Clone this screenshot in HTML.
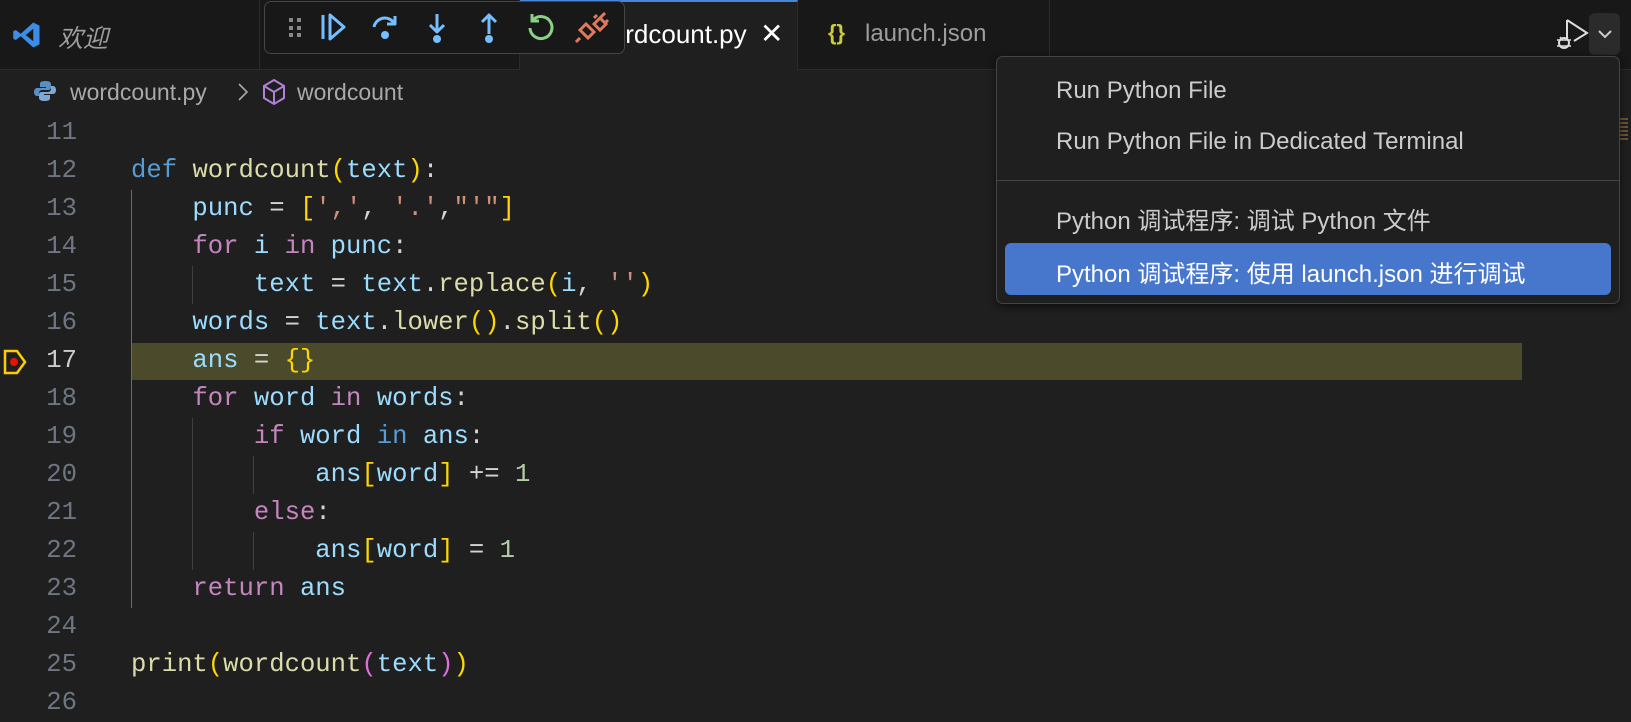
<!DOCTYPE html>
<html><head><meta charset="utf-8"><style>
*{margin:0;padding:0;box-sizing:border-box}
body{width:1631px;height:696px;background:#1f1f1f;position:relative;overflow:hidden;font-family:"Liberation Sans","Noto Sans CJK SC",sans-serif;color:#ccc}
.abs{position:absolute}
.tabs{left:0;top:0;width:1631px;height:70px;background:#181818;border-bottom:1px solid #2b2b2b}
.code{font-family:"Liberation Mono",monospace;font-size:25.6px;white-space:pre;line-height:38px}
.ln{position:absolute;left:0;width:77px;text-align:right;color:#6e7681;font-family:"Liberation Mono",monospace;font-size:25.6px;line-height:38px}
.cl{position:absolute;left:131px;color:#9cdcfe}
.k{color:#c586c0}.d{color:#569cd6}.f{color:#dcdcaa}.s{color:#ce9178}.y{color:#ffd700}.p{color:#da70d6}.n{color:#b5cea8}.w{color:#d4d4d4}
.guide{position:absolute;width:1px;background:#404040}
.menu{left:996px;top:56px;width:624px;height:248px;background:#1f1f1f;border:1px solid #454545;border-radius:7px;box-shadow:0 2px 8px rgba(0,0,0,.6)}
.mi{position:absolute;left:59px;font-size:24px;color:#ccc}
</style></head><body>
<div class="abs tabs"></div>
<div class="abs" style="left:0;top:0;width:260px;height:70px;border-right:1px solid #2b2b2b"></div>
<svg class="abs" style="left:12px;top:20px" width="30" height="30" viewBox="0 0 24 24"><path d="M17 2l5 2.5v15L17 22 7 13l-4 3-2-1V9l2-1 4 3 10-9zm0 5l-6 5 6 5z" fill="#3a8ee6"/></svg>
<div class="abs" style="left:58px;top:19px;font-size:25px;font-style:italic;color:#9d9d9d">欢迎</div>
<div class="abs" style="left:260px;top:0;width:260px;height:70px;border-right:1px solid #2b2b2b"></div>
<div class="abs" style="left:520px;top:0;width:278px;height:71px;background:#1f1f1f;border-top:2px solid #4a86d6;border-right:1px solid #2b2b2b"></div>
<div class="abs" style="left:592px;top:19px;font-size:26px;color:#fff">wordcount.py</div>
<div class="abs" style="left:760px;top:17px;font-size:28px;color:#fff">✕</div>
<div class="abs" style="left:798px;top:0;width:252px;height:70px;border-right:1px solid #2b2b2b"></div>
<div class="abs" style="left:828px;top:20px;font-size:22px;color:#cbcb41;font-weight:bold">{}</div>
<div class="abs" style="left:865px;top:20px;font-size:24px;color:#9d9d9d">launch.json</div>
<div class="abs" style="left:264px;top:1px;width:361px;height:53px;background:#181818;border:1px solid #454545;border-radius:7px"></div>
<svg class="abs" style="left:264px;top:1px" width="361" height="53" viewBox="264 1 361 53">
<g fill="#888"><rect x="289" y="18" width="4" height="4"/><rect x="297" y="18" width="4" height="4"/><rect x="289" y="26" width="4" height="4"/><rect x="297" y="26" width="4" height="4"/><rect x="289" y="33" width="4" height="4"/><rect x="297" y="33" width="4" height="4"/></g>
<g stroke="#75beff" stroke-width="3" fill="none" stroke-linejoin="round">
<path d="M323 15v24M330 15v24l14-12z"/>
<path d="M374 27a11 11 0 0 1 20-4M395 16v8h-8"/>
<path d="M437 14v17M430 25l7 7 7-7"/>
<path d="M489 34v-18M482 22l7-7 7 7"/>
</g>
<g fill="#75beff"><circle cx="385" cy="35" r="4"/><circle cx="437" cy="39" r="4"/><circle cx="489" cy="39" r="4"/></g>
<path d="M533 20a11 11 0 1 1 -3 8M532 14v7h7" stroke="#89d185" stroke-width="3" fill="none"/>
<g stroke="#e07a5f" stroke-width="3" fill="none"><path d="M580 30l6-6 8 8-6 6zM594 24l6-6 6 6-6 6zM580 38l-4 4M601 17l4-4M597 15l-3 3M608 20l-3 3"/></g>
</svg>
<svg class="abs" style="left:1550px;top:14px" width="40" height="40" viewBox="1550 14 40 40"><path d="M1567 20v22M1567 20l20 13-13 8" stroke="#ddd" stroke-width="2" fill="none"/><circle cx="1564" cy="43" r="5" stroke="#ddd" stroke-width="2" fill="#181818"/><path d="M1557 40h14M1557 46h14M1560 37l2 2M1568 37l-2 2" stroke="#ddd" stroke-width="1.5"/></svg>
<div class="abs" style="left:1589px;top:13px;width:31px;height:42px;background:#2b2b2b;border-radius:6px"></div>
<svg class="abs" style="left:1596px;top:27px" width="18" height="14" viewBox="0 0 18 14"><path d="M3 4l6 6 6-6" stroke="#ccc" stroke-width="2" fill="none"/></svg>
<svg class="abs" style="left:34px;top:80px" width="22" height="22" viewBox="0 0 22 22"><path d="M11 1c-5 0-5 2-5 3v3h6v1H3c-2 0-3 2-3 4s1 4 3 4h2v-3c0-2 2-3 3-3h6c2 0 3-1 3-3V4c0-2-2-3-6-3z" fill="#5a8fc4"/><path d="M11 21c5 0 5-2 5-3v-3h-6v-1h9c2 0 3-2 3-4s-1-4-3-4h-2v3c0 2-2 3-3 3H8c-2 0-3 1-3 3v3c0 2 2 3 6 3z" fill="#7fa9d3"/></svg>
<div class="abs" style="left:70px;top:79px;font-size:23px;color:#a9a9a9">wordcount.py</div>
<svg class="abs" style="left:236px;top:82px" width="14" height="20" viewBox="0 0 14 20"><path d="M3 2l8 8-8 8" stroke="#a9a9a9" stroke-width="1.6" fill="none"/></svg>
<svg class="abs" style="left:261px;top:78px" width="26" height="28" viewBox="0 0 26 28"><path d="M13 2l10 6v12l-10 6-10-6V8zM3 8l10 6 10-6M13 14v12" stroke="#b180d7" stroke-width="2" fill="none"/></svg>
<div class="abs" style="left:297px;top:79px;font-size:23px;color:#a9a9a9">wordcount</div>
<div class="abs" style="left:131px;top:343px;width:1391px;height:37px;background:#4b4b2b"></div>
<div class="guide" style="left:131px;top:190px;height:418px;background:#6a6a6a"></div>
<div class="guide" style="left:192px;top:266px;height:38px"></div>
<div class="guide" style="left:192px;top:418px;height:152px"></div>
<div class="guide" style="left:253px;top:456px;height:38px"></div>
<div class="guide" style="left:253px;top:532px;height:38px"></div>
<svg class="abs" style="left:3px;top:349px" width="24" height="26" viewBox="0 0 24 26"><path d="M2 2h12l8 11-8 11H2z" stroke="#ffcc00" stroke-width="2.5" fill="none"/><circle cx="11" cy="13" r="4" fill="#e51400"/></svg>
<div class="ln" style="top:114px">11</div>
<div class="ln" style="top:152px">12</div>
<div class="ln" style="top:190px">13</div>
<div class="ln" style="top:228px">14</div>
<div class="ln" style="top:266px">15</div>
<div class="ln" style="top:304px">16</div>
<div class="ln" style="top:342px;color:#ccc">17</div>
<div class="ln" style="top:380px">18</div>
<div class="ln" style="top:418px">19</div>
<div class="ln" style="top:456px">20</div>
<div class="ln" style="top:494px">21</div>
<div class="ln" style="top:532px">22</div>
<div class="ln" style="top:570px">23</div>
<div class="ln" style="top:608px">24</div>
<div class="ln" style="top:646px">25</div>
<div class="ln" style="top:684px">26</div>
<div class="code">
<div class="cl" style="top:152px"><span class="d">def</span> <span class="f">wordcount</span><span class="y">(</span>text<span class="y">)</span><span class="w">:</span></div>
<div class="cl" style="top:190px">    punc <span class="w">=</span> <span class="y">[</span><span class="s">','</span><span class="w">,</span> <span class="s">'.'</span><span class="w">,</span><span class="s">"'"</span><span class="y">]</span></div>
<div class="cl" style="top:228px">    <span class="k">for</span> i <span class="k">in</span> punc<span class="w">:</span></div>
<div class="cl" style="top:266px">        text <span class="w">=</span> text<span class="w">.</span><span class="f">replace</span><span class="y">(</span>i<span class="w">,</span> <span class="s">''</span><span class="y">)</span></div>
<div class="cl" style="top:304px">    words <span class="w">=</span> text<span class="w">.</span><span class="f">lower</span><span class="y">()</span><span class="w">.</span><span class="f">split</span><span class="y">()</span></div>
<div class="cl" style="top:342px">    ans <span class="w">=</span> <span class="y">{}</span></div>
<div class="cl" style="top:380px">    <span class="k">for</span> word <span class="k">in</span> words<span class="w">:</span></div>
<div class="cl" style="top:418px">        <span class="k">if</span> word <span class="d">in</span> ans<span class="w">:</span></div>
<div class="cl" style="top:456px">            ans<span class="y">[</span>word<span class="y">]</span> <span class="w">+=</span> <span class="n">1</span></div>
<div class="cl" style="top:494px">        <span class="k">else</span><span class="w">:</span></div>
<div class="cl" style="top:532px">            ans<span class="y">[</span>word<span class="y">]</span> <span class="w">=</span> <span class="n">1</span></div>
<div class="cl" style="top:570px">    <span class="k">return</span> ans</div>
<div class="cl" style="top:646px"><span class="f">print</span><span class="y">(</span><span class="f">wordcount</span><span class="p">(</span>text<span class="p">)</span><span class="y">)</span></div>
</div>
<div class="abs" style="left:1620px;top:118px;width:8px;height:24px;background:repeating-linear-gradient(#8a6a3a 0 2px,transparent 2px 4px);opacity:.7"></div>
<div class="abs menu">
<div class="mi" style="top:20px">Run Python File</div>
<div class="mi" style="top:71px">Run Python File in Dedicated Terminal</div>
<div class="abs" style="left:0;top:123px;width:622px;height:1px;background:#454545"></div>
<div class="mi" style="top:144px">Python 调试程序: 调试 Python 文件</div>
<div class="abs" style="left:8px;top:186px;width:606px;height:52px;background:#4677cc;border-radius:6px"></div>
<div class="mi" style="top:197px;color:#fff">Python 调试程序: 使用 launch.json 进行调试</div>
</div>
</body></html>
